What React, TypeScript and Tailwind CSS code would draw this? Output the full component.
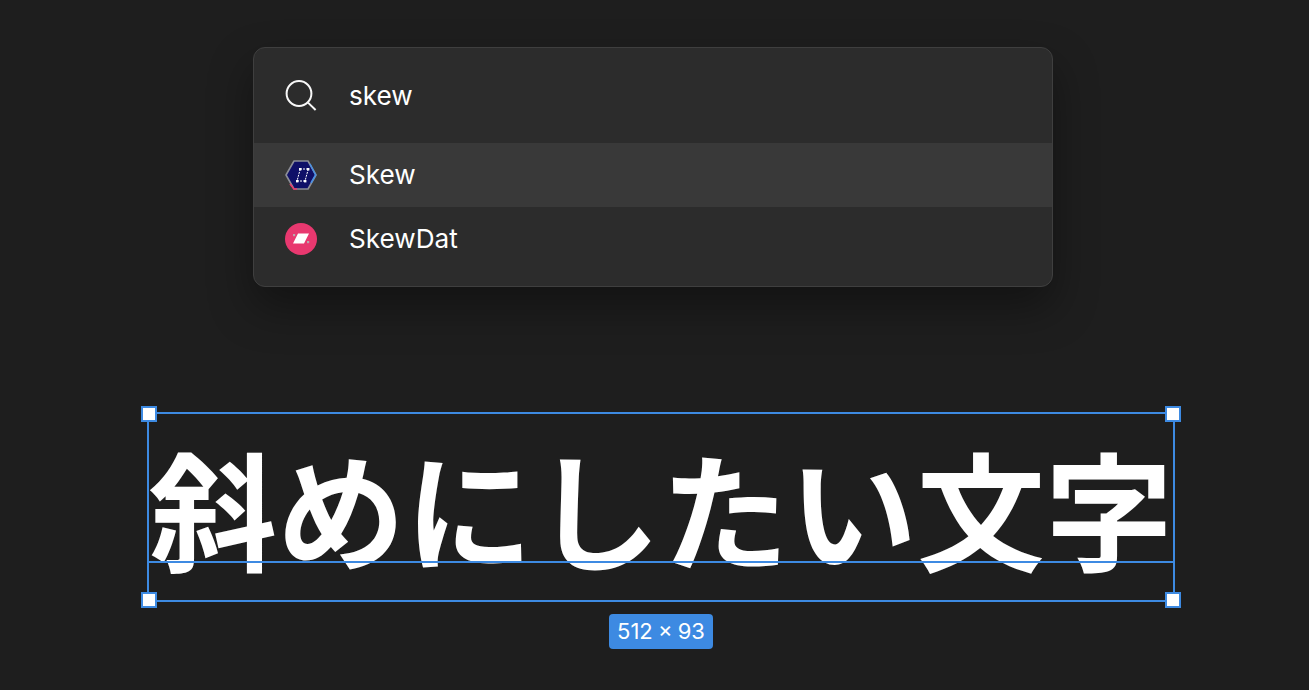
const SearchIcon = () => (
  <svg width="32" height="32" viewBox="0 0 32 32" fill="none" stroke="#f8f8f8" strokeWidth="2" className="shrink-0">
    <circle cx="14" cy="13.5" r="12.4" />
    <path d="M23 22.6 L30.6 30" />
  </svg>
);

const SkewIcon = () => (
  <svg width="32" height="32" viewBox="0 0 32 32" fill="none" className="shrink-0">
    <path d="M9 2 H23 L31 16 L23 30 H9 L1 16 Z" fill="#0f1068" stroke="#8b8d96" strokeWidth="1.6" strokeLinejoin="round" />
    <path d="M25 5 L30.6 16 L26 24" stroke="#4a90e2" strokeWidth="1.6" />
    <path d="M5 25 L9 30 H12" stroke="#e8396f" strokeWidth="1.6" />
    <path d="M15.3 10 L12 22 M23.3 10 L20 22 M15 10 H23 M12 22 H20" stroke="#ffffff" strokeWidth="1" strokeDasharray="2 1" />
    <rect x="14" y="9" width="2.4" height="2.4" fill="#ffffff" />
    <rect x="22" y="9" width="2.4" height="2.4" fill="#ffffff" />
    <rect x="11" y="21" width="2.4" height="2.4" fill="#ffffff" />
    <rect x="19" y="21" width="2.4" height="2.4" fill="#ffffff" />
  </svg>
);

const SkewDatIcon = () => (
  <svg width="32" height="32" viewBox="0 0 32 32" className="shrink-0">
    <circle cx="16" cy="16" r="16" fill="#e8386f" />
    <path d="M13 10.5 H24 L19 20.5 H8 Z" fill="#ffffff" />
    <rect x="8" y="11" width="2.2" height="2.2" fill="#b9a7ad" />
    <rect x="22" y="18" width="2.2" height="2.2" fill="#b9a7ad" />
  </svg>
);

const Handle = ({ className }: { className: string }) => (
  <div className={`absolute w-4 h-4 bg-white border-2 border-[#3d8ae2] ${className}`} />
);

const results = [
  { name: 'Skew', icon: <SkewIcon />, active: true },
  { name: 'SkewDat', icon: <SkewDatIcon />, active: false },
];

export default function App() {
  return (
    <div className="w-[1309px] h-[690px] overflow-hidden bg-[#1e1e1e] flex flex-col items-center pt-[47px] font-['Inter',sans-serif]">
      <div className="w-[800px] mr-[3px] pb-[15px] bg-[#2c2c2c] border border-[#3f3f3f] rounded-xl overflow-hidden shadow-[0_20px_44px_rgba(0,0,0,0.38)]">
        <div className="h-[95px] flex items-center gap-8 pl-[31px] text-[26.15px] text-white">
          <SearchIcon />
          <span>skew</span>
        </div>
        {results.map((result) => (
          <div
            key={result.name}
            className={`h-16 flex items-center gap-8 pl-[31px] text-[26.15px] text-white ${result.active ? 'bg-[#393939]' : ''}`}
          >
            {result.icon}
            <span>{result.name}</span>
          </div>
        ))}
      </div>

      <div className="relative mt-[125px] ml-[13px] w-[1028px] h-[190px] border-2 border-[#3d8ae2]">
        <div className="absolute left-0 right-0 top-[147px] h-0.5 bg-[#3d8ae2] z-10" />
        <p className="h-full flex items-center justify-center whitespace-nowrap text-[128px] leading-[184px] font-bold text-white font-['Noto_Sans_CJK_JP',sans-serif]">
          斜めにしたい文字
        </p>
        <Handle className="-left-2 -top-2 z-20" />
        <Handle className="-right-2 -top-2 z-20" />
        <Handle className="-left-2 -bottom-2 z-20" />
        <Handle className="-right-2 -bottom-2 z-20" />
      </div>

      <div className="mt-3 ml-[13px] w-[104px] h-[35px] flex items-center justify-center rounded bg-[#3d8ae2] text-[22px] text-white whitespace-nowrap [word-spacing:-1px]">
        512 × 93
      </div>
    </div>
  );
}
